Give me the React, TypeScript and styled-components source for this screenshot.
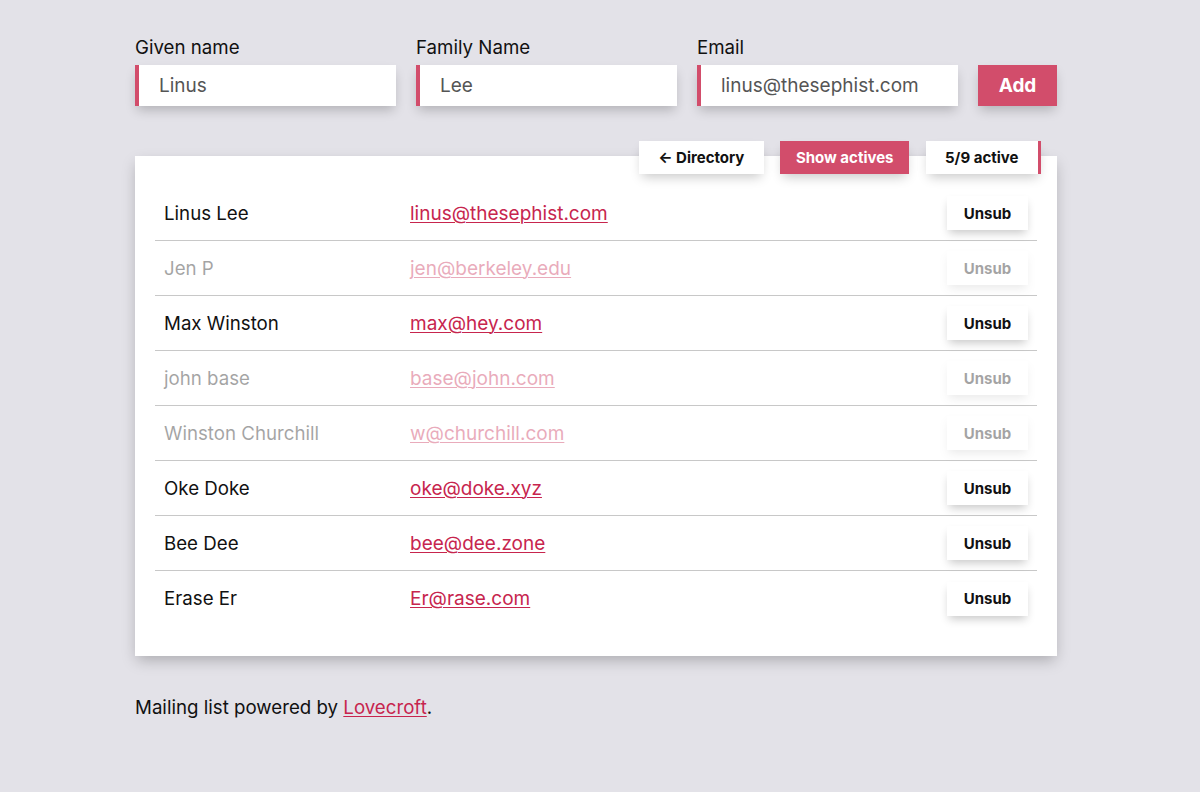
import React from "react";
import styled, { createGlobalStyle } from "styled-components";

const ACCENT = "#d24d6b";
const LINK = "#c7254e";

const Global = createGlobalStyle`
  html, body { margin: 0; padding: 0; background: #e3e2e8; }
  body { font-family: Inter, "Noto Sans", "Liberation Sans", sans-serif; color: #111; }
  * { box-sizing: border-box; }
`;

const Page = styled.div`
  width: 922px;
  margin: 0 0 0 135px;
  padding-top: 37px;
`;

const Form = styled.form`
  display: flex;
  align-items: flex-end;
  gap: 20px;
`;

const Field = styled.label`
  display: flex;
  flex-direction: column;
  gap: 6px;
  width: 261px;
  font-size: 18.7px;
  line-height: 22px;
`;

const Input = styled.input`
  height: 41px;
  border: none;
  border-left: 4px solid ${ACCENT};
  background: #fff;
  padding: 0 0 0 20px;
  font-family: inherit;
  font-size: 19px;
  color: #555;
  box-shadow: 0 6px 12px -2px rgba(0, 0, 0, 0.22);
  outline: none;
`;

const AddButton = styled.button`
  width: 79px;
  height: 41px;
  border: none;
  background: ${ACCENT};
  color: #fff;
  font-family: inherit;
  font-weight: 700;
  font-size: 19px;
  box-shadow: 0 6px 12px -2px rgba(0, 0, 0, 0.22);
`;

const Card = styled.section`
  position: relative;
  margin-top: 50px;
  background: #fff;
  padding: 30px 20px;
  box-shadow: 0 6px 14px -2px rgba(0, 0, 0, 0.25);
`;

const Tabs = styled.div`
  position: absolute;
  top: -15px;
  right: 16px;
  display: flex;
  gap: 16.5px;
`;

const Tab = styled.button<{ $active?: boolean; $marked?: boolean }>`
  height: 33px;
  padding: 0 ${(p) => (p.$active ? 15.5 : 19.5)}px;
  border: none;
  border-right: ${(p) => (p.$marked ? `3px solid ${ACCENT}` : "none")};
  background: ${(p) => (p.$active ? ACCENT : "#fff")};
  color: ${(p) => (p.$active ? "#fff" : "#111")};
  font-family: inherit;
  font-weight: 700;
  font-size: 15px;
  box-shadow: 0 6px 12px -3px rgba(0, 0, 0, 0.22);
`;

const Row = styled.div<{ $last?: boolean }>`
  display: flex;
  align-items: center;
  height: 55px;
  border-bottom: ${(p) => (p.$last ? "none" : "1px solid #c8c8c8")};
  padding: 0 9px;
`;

const Cells = styled.div<{ $inactive?: boolean }>`
  display: flex;
  align-items: center;
  flex: 1;
  opacity: ${(p) => (p.$inactive ? 0.38 : 1)};
`;

const Name = styled.div`
  width: 246px;
  font-size: 18.7px;
`;

const Email = styled.a`
  flex: 1;
  font-size: 19px;
  color: ${LINK};
  text-decoration: underline;
  text-underline-offset: 2px;
  text-decoration-thickness: 1px;
`;

const Unsub = styled.button`
  width: 81px;
  height: 34px;
  border: none;
  background: #fff;
  font-family: inherit;
  font-weight: 700;
  font-size: 15px;
  color: #111;
  box-shadow: 0 5px 10px -2px rgba(0, 0, 0, 0.22);
`;

const Footer = styled.p`
  margin: 40px 0 0;
  font-size: 18.7px;
`;

const FooterLink = styled.a`
  color: ${LINK};
  text-decoration: underline;
  text-underline-offset: 2px;
`;

const people = [
  { name: "Linus Lee", email: "linus@thesephist.com", active: true },
  { name: "Jen P", email: "jen@berkeley.edu", active: false },
  { name: "Max Winston", email: "max@hey.com", active: true },
  { name: "john base", email: "base@john.com", active: false },
  { name: "Winston Churchill", email: "w@churchill.com", active: false },
  { name: "Oke Doke", email: "oke@doke.xyz", active: true },
  { name: "Bee Dee", email: "bee@dee.zone", active: true },
  { name: "Erase Er", email: "Er@rase.com", active: true },
];

export default function App() {
  return (
    <>
      <Global />
      <Page>
        <Form onSubmit={(e) => e.preventDefault()}>
          <Field>
            Given name
            <Input defaultValue="Linus" />
          </Field>
          <Field>
            Family Name
            <Input defaultValue="Lee" />
          </Field>
          <Field>
            Email
            <Input defaultValue="linus@thesephist.com" />
          </Field>
          <AddButton type="submit">Add</AddButton>
        </Form>
        <Card>
          <Tabs>
            <Tab>← Directory</Tab>
            <Tab $active>Show actives</Tab>
            <Tab $marked>5/9 active</Tab>
          </Tabs>
          {people.map((p, i) => (
            <Row key={p.email} $last={i === people.length - 1}>
              <Cells $inactive={!p.active}>
                <Name>{p.name}</Name>
                <Email href="#">{p.email}</Email>
                <Unsub>Unsub</Unsub>
              </Cells>
            </Row>
          ))}
        </Card>
        <Footer>
          Mailing list powered by <FooterLink href="#">Lovecroft</FooterLink>.
        </Footer>
      </Page>
    </>
  );
}
